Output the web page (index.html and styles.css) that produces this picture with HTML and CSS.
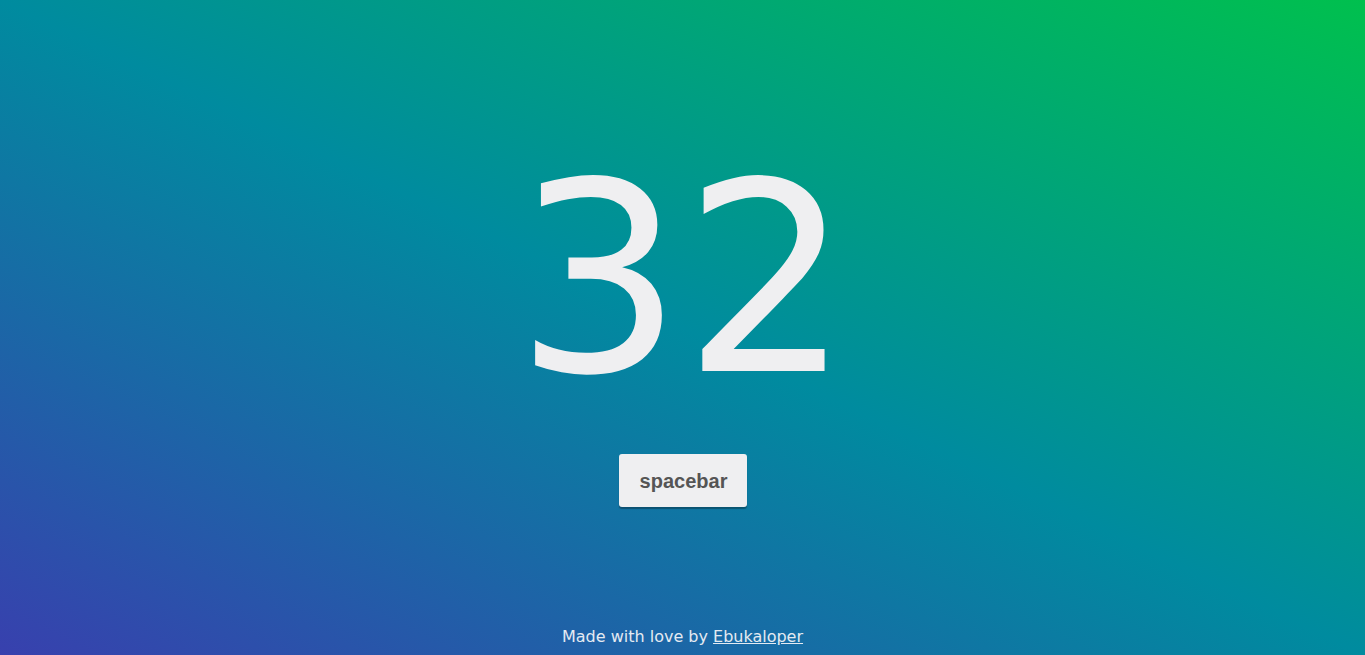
FILE: index.html
```html
<!DOCTYPE html>
<html lang="en">
<head>
<meta charset="utf-8">
<title>Counter</title>
<link rel="stylesheet" href="styles.css">
</head>
<body>
<div class="page">
  <main class="main">
    <div class="count">32</div>
    <button class="btn">spacebar</button>
  </main>
  <footer class="footer">Made with love by <a href="#" class="link">Ebukaloper</a></footer>
</div>
</body>
</html>
```
FILE: styles.css
```css
html, body {
  margin: 0;
  padding: 0;
  height: 100%;
}
body {
  font-family: "DejaVu Sans", sans-serif;
  background: linear-gradient(to top right, #3840ae 0%, #008b9f 50%, #00c04e 100%);
  overflow: hidden;
}
.page {
  height: 100vh;
  display: flex;
  flex-direction: column;
  align-items: center;
}
.main {
  display: flex;
  flex-direction: column;
  align-items: center;
  padding-top: 121px;
}
.count {
  font-size: 264px;
  line-height: 318px;
  color: #efeff1;
  padding-left: 1px;
}
.btn {
  margin-top: 15px;
  width: 128px;
  height: 53px;
  padding: 2px 0 0 2px;
  border: none;
  border-radius: 3px;
  background: #efeff1;
  color: #555555;
  font-family: "Liberation Sans", Arial, sans-serif;
  font-weight: bold;
  font-size: 20px;
  box-shadow: 0 2px 1px rgba(0,0,0,0.3);
  cursor: pointer;
}
.footer {
  margin-top: auto;
  padding-bottom: 9px;
  font-size: 16px;
  color: #e4eaf2;
}
.link {
  color: #e4eaf2;
  text-decoration: underline;
}
```
